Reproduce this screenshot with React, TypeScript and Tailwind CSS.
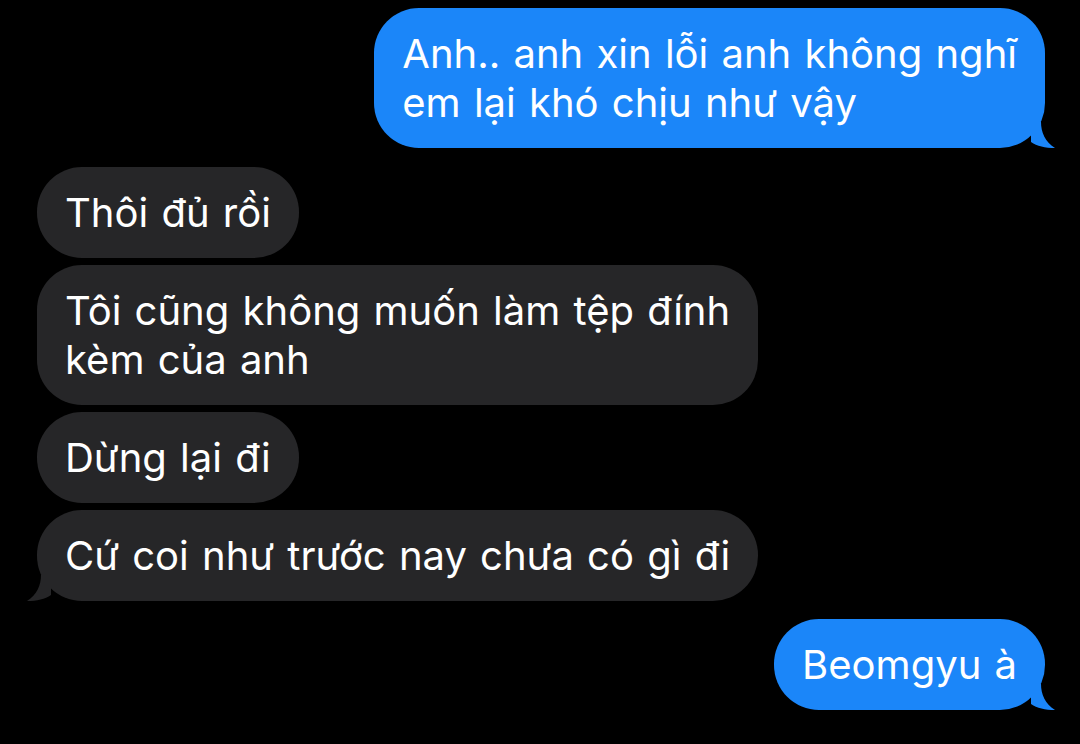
const messages: { from: "me" | "them"; text: string; tail?: boolean }[] = [
  { from: "me", text: "Anh.. anh xin lỗi anh không nghĩ\nem lại khó chịu như vậy", tail: true },
  { from: "them", text: "Thôi đủ rồi" },
  { from: "them", text: "Tôi cũng không muốn làm tệp đính\nkèm của anh" },
  { from: "them", text: "Dừng lại đi" },
  { from: "them", text: "Cứ coi như trước nay chưa có gì đi", tail: true },
  { from: "me", text: "Beomgyu à", tail: true },
];

const TailRight = () => (
  <svg
    className="absolute -right-[10px] bottom-0"
    width="24"
    height="26"
    viewBox="0 0 24 26"
  >
    <path d="M0 0 L10 0 C10 10 14 20 24 26 C14 26 6 24 0 20 Z" fill="#1b86f9" />
  </svg>
);

const TailLeft = () => (
  <svg
    className="absolute -left-[10px] bottom-0"
    width="24"
    height="26"
    viewBox="0 0 24 26"
  >
    <path d="M24 0 L14 0 C14 10 10 20 0 26 C10 26 18 24 24 20 Z" fill="#262628" />
  </svg>
);

const Bubble = ({ from, text, tail }: { from: "me" | "them"; text: string; tail?: boolean }) => {
  const mine = from === "me";
  return (
    <div className={mine ? "flex justify-end" : "flex justify-start"}>
      <div
        className={
          mine
            ? "relative rounded-[45px] bg-[#1b86f9] px-[28px] py-[21px] text-white"
            : "relative rounded-[45px] bg-[#262628] px-[28px] py-[21px] text-white"
        }
      >
        {tail && (mine ? <TailRight /> : <TailLeft />)}
        <p className="relative whitespace-pre-line text-[40px] leading-[49px] [word-spacing:2px]">
          {text}
        </p>
      </div>
    </div>
  );
};

export default function App() {
  return (
    <div
      className="h-[744px] w-[1080px] overflow-hidden bg-black pl-[37px] pr-[35px] pt-[8px]"
      style={{ fontFamily: "Inter, 'Noto Sans', sans-serif" }}
    >
      <div className="flex flex-col">
        <Bubble {...messages[0]} />
        <div className="mt-[19px] flex flex-col gap-[7px]">
          <Bubble {...messages[1]} />
          <Bubble {...messages[2]} />
          <Bubble {...messages[3]} />
          <Bubble {...messages[4]} />
        </div>
        <div className="mt-[18px]">
          <Bubble {...messages[5]} />
        </div>
      </div>
    </div>
  );
}
